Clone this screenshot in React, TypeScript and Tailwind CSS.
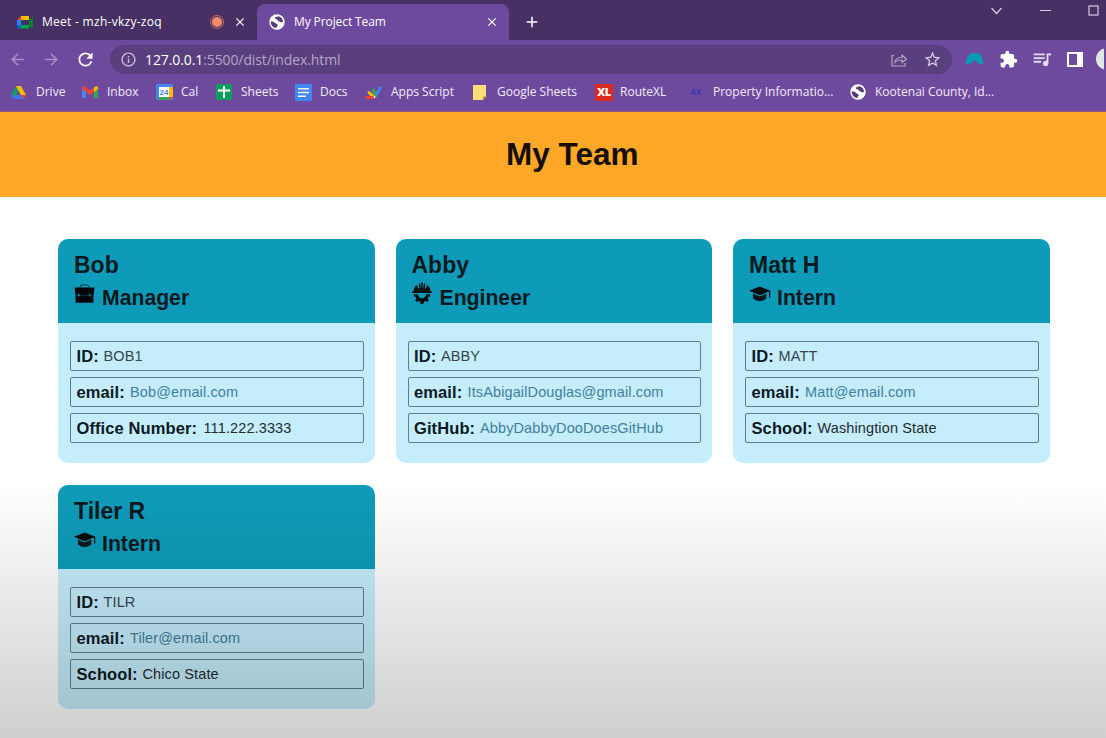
import { ReactNode } from 'react';
import { MdExtension, MdOutlineQueueMusic, MdStarBorder, MdRefresh, MdArrowBack, MdArrowForward, MdInfoOutline, MdClose, MdAdd } from 'react-icons/md';

function Meet() {
  return (
    <svg width="16" height="14" viewBox="0 0 16 14" className="shrink-0">
      <path d="M4 1h8v4H4z" fill="#fbbc04" />
      <path d="M4 1v4H0z" fill="#ea4335" />
      <path d="M0 5h4v5H0z" fill="#2684fc" />
      <path d="M0 10h4v3.500H1.500Q0 13.500 0 12z" fill="#0066da" />
      <path d="M4 10h8v3.500H4z" fill="#00ac47" />
      <path d="M12 5 16 2v10.500h-3l-1-2z" fill="#00832d" />
    </svg>
  );
}

function Globe() {
  return (
    <svg width="16" height="16" viewBox="0 0 16 16" className="shrink-0">
      <circle cx="8" cy="8" r="7.700" fill="#fff" />
      <path d="M1.800 7.500C4 7.200 5.500 8 6.200 8.900S8.900 9.800 8.700 11.200 7.500 12.500 7.300 14C4 13.800 1.500 11 1.800 7.500z" fill="#573b7f" />
      <path d="M9.300 2.200C7.800 2.800 5.800 2.900 5.900 4.300S8.400 4.900 8.700 6.200s1.600.9 2.400 1.500 1.500.8 2.900.3C14.100 5 12.300 2.600 9.300 2.200z" fill="#573b7f" />
    </svg>
  );
}

function Drive() {
  return (
    <svg width="15" height="14" viewBox="0 0 15 14">
      <path d="M5 1h5L5 10H0z" fill="#139c62" />
      <path d="M5 1h5l5 9h-5z" fill="#fbbc04" />
      <path d="M2.500 14 0 10h15l-2.500 4z" fill="#3777e3" />
      <path d="m12.500 14 2.500-4h-5z" fill="#ea4335" />
    </svg>
  );
}

function Gmail() {
  return (
    <svg width="16" height="12" viewBox="0 0 16 12">
      <path d="M0 2h4v10H0z" fill="#4285f4" />
      <path d="M12 2h4v10h-4z" fill="#34a853" />
      <path d="M0 1.500Q1-.5 3 .8L8 4.500l5-3.700q2-1.300 3 .7V3L8 9 0 3z" fill="#ea4335" />
      <path d="M12 1.500Q15-.8 16 1.500V3l-4 3z" fill="#fbbc04" />
    </svg>
  );
}

function Calendar() {
  return (
    <svg width="17" height="16" viewBox="0 0 17 16">
      <rect width="17" height="16" rx="1.500" fill="#4285f4" />
      <path d="M13 3h4v10h-4z" fill="#fbbc04" />
      <path d="M3 13h10v3H3z" fill="#34a853" />
      <path d="M13 13h4l-4 3z" fill="#ea4335" />
      <path d="M3 3h10v10H3z" fill="#fff" />
      <text x="8" y="11" textAnchor="middle" fontSize="8" fontWeight="700" fontFamily="Liberation Sans, sans-serif" fill="#4285f4">24</text>
    </svg>
  );
}

function SheetsIcon() {
  return (
    <svg width="16" height="16" viewBox="0 0 16 16">
      <rect width="16" height="16" rx="1" fill="#0f9d58" />
      <path d="M7 2h2v12H7zM2 5.500h12v2H2z" fill="#fff" />
    </svg>
  );
}

function DocsIcon() {
  return (
    <svg width="17" height="17" viewBox="0 0 17 17">
      <rect width="17" height="17" rx="1" fill="#4285f4" />
      <path d="M3 4h11v1.600H3zM3 7.700h11v1.600H3zM3 11.400h8V13H3z" fill="#fff" />
    </svg>
  );
}

function ScriptIcon() {
  return (
    <svg width="17" height="15" viewBox="0 0 17 15" fill="none" strokeWidth="3" strokeLinecap="round">
      <path d="M11 10.500 15 3" stroke="#4285f4" />
      <path d="m10 11-1.500-6" stroke="#34a853" />
      <path d="M8 11.500 4 7.500" stroke="#fbbc04" />
      <path d="M2 12.500h7" stroke="#ea4335" />
      <circle cx="9.500" cy="12" r=".9" fill="#fff" />
    </svg>
  );
}

function NoteIcon() {
  return (
    <svg width="14" height="15" viewBox="0 0 14 15">
      <path d="M0 0h13v11.500L10 15H0z" fill="#fddc7b" />
      <path d="M10 15v-3.500h3z" fill="#b8892b" />
    </svg>
  );
}

function RouteIcon() {
  return (
    <span className="flex h-[17px] w-[18px] items-center justify-center bg-[#dd2c1f] text-[11px] font-black tracking-[-0.5px] text-white">XL</span>
  );
}

function AxIcon() {
  return <span className="flex h-4 w-4 items-center justify-center text-[8px] font-bold text-[#4030b8]">AX</span>;
}

function Briefcase() {
  return (
    <svg width="21" height="20" viewBox="0 0 21 20">
      <path d="M6 4V3Q6.500.8 8.500.8h4Q14.500.8 15 3v1" fill="none" stroke="#06303a" strokeWidth="1" />
      <path d="M.5 3.500h20L19.500 11h-18zM1.500 10.500h18v8.300h-18z" fill="#020609" />
      <path d="M3 11.300h15" stroke="#0a4a58" strokeWidth=".8" />
      <path d="M4 10.300h2v2H4zM15 10.300h2v2h-2z" fill="#0d7c93" />
    </svg>
  );
}

function HelmetGear() {
  return (
    <svg width="20" height="24" viewBox="0 0 20 24" fill="#06100f">
      <path d="M1.500 9.500C1.500 6 3 3.900 5 3l1.200 3.500h1L6.800 1.500l1.300-.3.700 5h.4V.3h1.600v5.900h.4l.7-5 1.300.3-.4 5h1L15 3c2 .9 3.500 3 3.500 6.500H20V11H0V9.500z" />
      <path d="M2 12.300h4c.4 2.600 2 4 4 4s3.600-1.400 4-4h4l.3 2-2 .7-.6 1.400 1.100 1.900-1.600 1.600-2-1-1.200.6-.6 2.500H8.600L8 19.500l-1.200-.6-2 1-1.600-1.600 1.100-1.900-.6-1.400-2-.7z" />
    </svg>
  );
}

function Cap() {
  return (
    <svg width="22" height="17" viewBox="0 0 22 17">
      <path d="M0 4.800 10.800.5l10.700 4.300-10.700 4.500z" fill="#030809" />
      <path d="M4 7.600v5q6.700 5.200 13.300 0v-5l-6.500 2.800z" fill="#06161a" />
      <path d="M20.600 5v6.500" stroke="#06161a" strokeWidth="1.300" />
    </svg>
  );
}

type Field = { label: string; value: string; lw: string; tone: string };
type Member = { name: string; role: string; icon: ReactNode; fields: Field[] };

const dark = 'text-[#35464c]';
const link = 'text-[#427f9b]';
const strong = 'text-[#1f2c30]';

const members: Member[] = [
  { name: 'Bob', role: 'Manager', icon: <Briefcase />, fields: [
    { label: 'ID:', value: 'BOB1', lw: 'w-[27px]', tone: dark },
    { label: 'email:', value: 'Bob@email.com', lw: 'w-[53.500px]', tone: link },
    { label: 'Office Number:', value: '111.222.3333', lw: 'w-[127px]', tone: strong },
  ] },
  { name: 'Abby', role: 'Engineer', icon: <HelmetGear />, fields: [
    { label: 'ID:', value: 'ABBY', lw: 'w-[27px]', tone: dark },
    { label: 'email:', value: 'ItsAbigailDouglas@gmail.com', lw: 'w-[53.500px]', tone: link },
    { label: 'GitHub:', value: 'AbbyDabbyDooDoesGitHub', lw: 'w-[66px]', tone: link },
  ] },
  { name: 'Matt H', role: 'Intern', icon: <Cap />, fields: [
    { label: 'ID:', value: 'MATT', lw: 'w-[27px]', tone: dark },
    { label: 'email:', value: 'Matt@email.com', lw: 'w-[53.500px]', tone: link },
    { label: 'School:', value: 'Washingtion State', lw: 'w-[66px]', tone: strong },
  ] },
  { name: 'Tiler R', role: 'Intern', icon: <Cap />, fields: [
    { label: 'ID:', value: 'TILR', lw: 'w-[27px]', tone: dark },
    { label: 'email:', value: 'Tiler@email.com', lw: 'w-[53.500px]', tone: link },
    { label: 'School:', value: 'Chico State', lw: 'w-[66px]', tone: strong },
  ] },
];

function Card({ m }: { m: Member }) {
  return (
    <article className="h-56 w-[316.500px] overflow-hidden rounded-[10px] bg-[#c5edfc]">
      <header className="h-[84px] bg-[#0e9bb9] pl-4 pt-3 text-[#06191e]">
        <h2 className="h-7 text-[23px] font-bold leading-7">{m.name}</h2>
        <div className="flex h-[38px]">
          <div className="flex h-[30px] w-7 items-center">{m.icon}</div>
          <h3 className="text-[21.200px] font-bold leading-[38px]">{m.role}</h3>
        </div>
      </header>
      <ul className="flex flex-col gap-1.5 pl-3 pr-[11px] pt-[18px]">
        {m.fields.map((f) => (
          <li key={f.label} className="flex h-[30px] items-center rounded-[2px] border border-[#5b7f8d] pl-[5.500px]">
            <span className={`${f.lw} shrink-0 whitespace-nowrap pb-px text-[16.500px] font-bold leading-5 tracking-[0.1px] text-[#0c1a1f]`}>{f.label}</span>
            <span className={`${f.tone} whitespace-nowrap text-[14.500px] leading-5 tracking-[0.12px]`}>{f.value}</span>
          </li>
        ))}
      </ul>
    </article>
  );
}

const bookmarks = [
  { icon: <Drive />, text: 'Drive', w: 'w-[71px]', gap: 'w-[25px]' },
  { icon: <Gmail />, text: 'Inbox', w: 'w-[74px]', gap: 'w-[25px]' },
  { icon: <Calendar />, text: 'Cal', w: 'w-[60px]', gap: 'w-[25px]' },
  { icon: <SheetsIcon />, text: 'Sheets', w: 'w-[79px]', gap: 'w-[25px]' },
  { icon: <DocsIcon />, text: 'Docs', w: 'w-[70px]', gap: 'w-[25px]' },
  { icon: <ScriptIcon />, text: 'Apps Script', w: 'w-[108px]', gap: 'w-[26px]' },
  { icon: <NoteIcon />, text: 'Google Sheets', w: 'w-[122px]', gap: 'w-[24px]' },
  { icon: <RouteIcon />, text: 'RouteXL', w: 'w-[93px]', gap: 'w-[25px]' },
  { icon: <AxIcon />, text: 'Property Informatio...', w: 'w-[162px]', gap: 'w-[25px]' },
  { icon: <Globe />, text: 'Kootenai County, Id...', w: 'w-[160px]', gap: 'w-[25px]' },
];

function Browser() {
  return (
    <div className="h-28 border-b border-[#8d5a84] bg-[#6e4a9f] font-['Open_Sans',sans-serif] text-white">
      <div className="flex h-10 bg-[#463064]">
        <div className="flex h-10 w-[257px] items-center pl-[17px] pt-1 text-[12px]">
          <Meet />
          <span className="ml-[9px] w-[168px] whitespace-nowrap tracking-[0.28px]">Meet - mzh-vkzy-zoq</span>
          <span className="flex h-[14px] w-[14px] items-center justify-center rounded-full border border-[#c76c66]">
            <span className="h-2.5 w-2.5 rounded-full bg-[#ef8b6c]" />
          </span>
          <MdClose size={14} className="ml-[9px]" />
        </div>
        <div className="mt-1 flex h-9 w-[252px] items-center rounded-t-lg bg-[#6e4a9f] pl-3 text-[12px]">
          <Globe />
          <span className="ml-[9px] w-[191px] whitespace-nowrap tracking-[-0.1px]">My Project Team</span>
          <MdClose size={14} />
        </div>
        <MdAdd size={18} className="ml-3.5 mt-[13px]" />
        <svg width="120" height="20" viewBox="0 0 120 20" className="ml-auto" fill="none" stroke="#d7cce4" strokeWidth="1.200">
          <path d="m5.500 8 5 5.500 5-5.500M54 10.500h11" />
          <rect x="103" y="6" width="9" height="9" />
        </svg>
      </div>
      <div className="flex h-[38px] items-center text-[#a98fc9]">
        <MdArrowBack size={19} className="ml-2" />
        <MdArrowForward size={19} className="ml-[15px]" />
        <MdRefresh size={21} className="ml-[14px] text-white" />
        <div className="ml-[14px] flex h-[29px] w-[842px] items-center rounded-full bg-[#593f7d] pl-[10px]">
          <MdInfoOutline size={17} className="text-[#cbbdd9]" />
          <span className="ml-2 w-[744px] whitespace-nowrap text-[14px] tracking-[-0.1px] text-[#b5a6c7]">
            <span className="text-white">127.0.0.1</span>:5500/dist/index.html
          </span>
          <svg width="17" height="15" viewBox="0 0 17 15" fill="none" stroke="#b5a5c6" strokeWidth="1.200" className="ml-0.5">
            <path d="M3 3.500H1v10.500h13v-3M4 10.500c.3-4 2.700-5 7-5V3l4.500 4L11 10.500v-2.500c-3.500 0-5.500.5-7 2.500z" />
          </svg>
          <MdStarBorder size={19} className="ml-[15px] text-[#d5cadf]" />
        </div>
        <svg width="17" height="14" viewBox="0 0 17 14" className="ml-[14px] shrink-0">
          <path d="M0 12.500C0 5 3 1 6 1l2.500.6L11 1c3 0 6 4 6 11.500l-4.500-1L8.500 8l-4 3.500z" fill="#079bb5" />
        </svg>
        <MdExtension size={19} className="ml-[16px] shrink-0 text-white" />
        <MdOutlineQueueMusic size={22} className="ml-[13px] shrink-0 text-[#e6dcf2]" />
        <svg width="16" height="15" viewBox="0 0 16 15" className="ml-[14px] shrink-0"><path d="M0 0h16v15H0zM2 2v11h8V2z" fill="#fff" fillRule="evenodd" /></svg>
        <div className="ml-[13px] h-[22px] w-2 shrink-0 overflow-hidden">
          <div className="h-[22px] w-[22px] rounded-full bg-[#dfe9df]" />
        </div>
      </div>
      <div className="flex h-7 items-center overflow-hidden pl-[11px] text-[12px] text-[#f3edf8]">
        {bookmarks.map((b) => (
          <div key={b.text} className={`${b.w} flex h-[27px] shrink-0 items-center`}>
            <span className={`${b.gap} shrink-0`}>{b.icon}</span>
            <span className="whitespace-nowrap">{b.text}</span>
          </div>
        ))}
      </div>
    </div>
  );
}

export default function App() {
  return (
    <div className="relative h-[738px] w-[1106px] overflow-hidden bg-white font-['Liberation_Sans',sans-serif]">
      <Browser />
      <header className="h-[85px] bg-[#ffa726] pl-[506px] pt-[22px]">
        <h1 className="text-[31.500px] font-bold leading-[40px] text-[#160e04]">My Team</h1>
      </header>
      <main className="flex flex-wrap gap-x-[21px] gap-y-[22px] pl-[58px] pt-[42px]">
        {members.map((m) => <Card key={m.name} m={m} />)}
      </main>
      <div className="pointer-events-none absolute inset-x-0 bottom-0 h-[254px] bg-linear-to-b from-transparent to-black/19" />
    </div>
  );
}
